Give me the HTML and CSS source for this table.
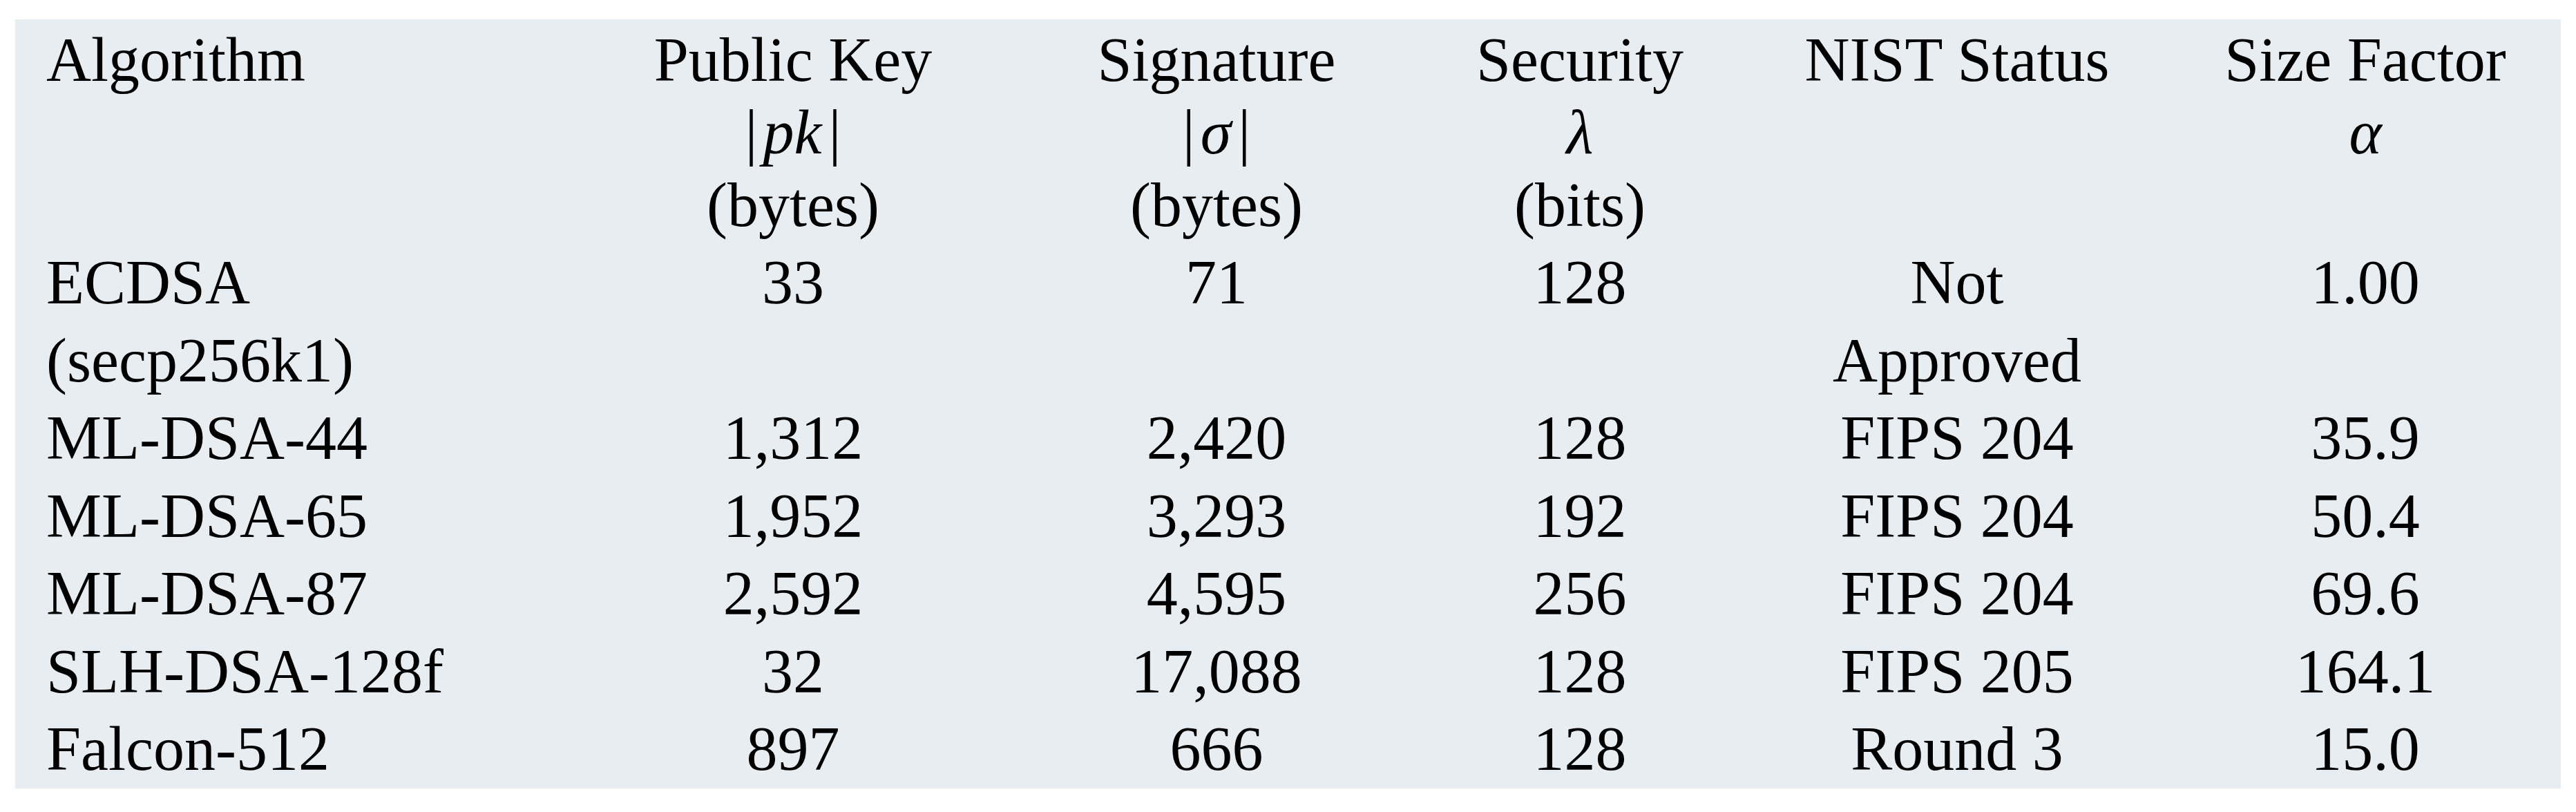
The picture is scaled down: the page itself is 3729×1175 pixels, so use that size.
FILE: index.html
```html
<!DOCTYPE html>
<html lang="en">
<head>
<meta charset="utf-8">
<title>Signature schemes comparison</title>
<link rel="stylesheet" href="styles.css">
</head>
<body>
<div class="panel">
<table class="cmp">
  <colgroup>
    <col class="c1"><col class="c2"><col class="c3"><col class="c4"><col class="c5"><col class="c6">
  </colgroup>
  <thead>
    <tr>
      <th class="left">Algorithm</th>
      <th>Public Key<br><span class="m">|<i>pk</i>|</span><br>(bytes)</th>
      <th>Signature<br><span class="m">|<i>σ</i>|</span><br>(bytes)</th>
      <th>Security<br><i>λ</i><br>(bits)</th>
      <th>NIST Status</th>
      <th>Size Factor<br><i>α</i></th>
    </tr>
  </thead>
  <tbody>
    <tr class="first"><td class="left">ECDSA<br>(secp256k1)</td><td>33</td><td>71</td><td>128</td><td>Not<br>Approved</td><td>1.00</td></tr>
    <tr><td class="left">ML-DSA-44</td><td>1,312</td><td>2,420</td><td>128</td><td>FIPS 204</td><td>35.9</td></tr>
    <tr><td class="left">ML-DSA-65</td><td>1,952</td><td>3,293</td><td>192</td><td>FIPS 204</td><td>50.4</td></tr>
    <tr><td class="left">ML-DSA-87</td><td>2,592</td><td>4,595</td><td>256</td><td>FIPS 204</td><td>69.6</td></tr>
    <tr><td class="left">SLH-DSA-128f</td><td>32</td><td>17,088</td><td>128</td><td>FIPS 205</td><td>164.1</td></tr>
    <tr><td class="left">Falcon-512</td><td>897</td><td>666</td><td>128</td><td>Round 3</td><td>15.0</td></tr>
  </tbody>
</table>
</div>
</body>
</html>
```
FILE: styles.css
```css
html, body {
  margin: 0;
  padding: 0;
  background: #ffffff;
}
body {
  font-family: "Liberation Serif", "Times New Roman", serif;
  font-size: 90px;
  color: #000000;
}
.panel {
  margin: 28px 0 0 22px;
  width: 3685px;
  background: #e8edf1;
}
.cmp {
  width: 3685px;
  table-layout: fixed;
  border-collapse: collapse;
  border-spacing: 0;
}
.c1 { width: 801px; }
.c2 { width: 650px; }
.c3 { width: 576px; }
.c4 { width: 476px; }
.c5 { width: 616px; }
.c6 { width: 566px; }
.cmp th, .cmp td {
  padding: 0;
  text-align: center;
  vertical-align: top;
  font-weight: normal;
  white-space: nowrap;
}
.cmp th {
  line-height: 105px;
  padding-top: 6px;
}
.cmp td {
  line-height: 112.5px;
}
.cmp tr.first td {
  padding-top: 4px;
}
.cmp .left {
  text-align: left;
  padding-left: 45px;
}
.cmp i {
  font-style: italic;
}
.m i {
  padding: 0 10px 0 8px;
}
```
